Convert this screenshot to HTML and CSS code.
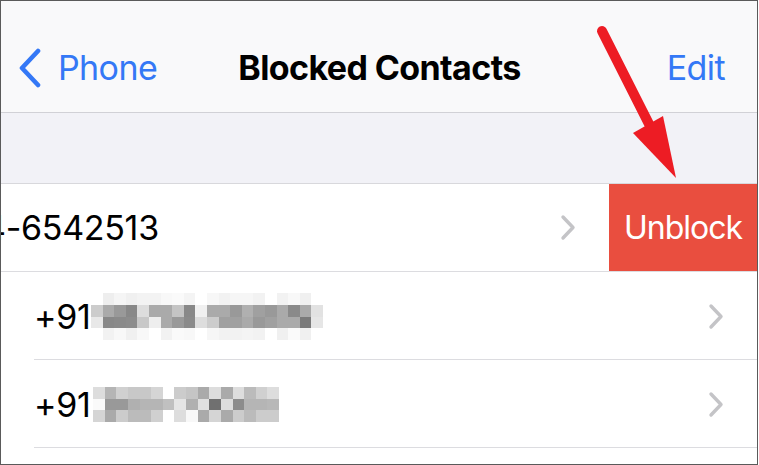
FILE: index.html
```html
<!DOCTYPE html>
<html lang="en">
  <head>
    <link rel="stylesheet" href="styles.css">
    <title>Blocked Contacts</title>
  </head>
  <body>
    <div class="frame">
      <div class="nav">
        <div class="back">
          <svg class="back-icon" width="24" height="40" viewBox="0 0 24 40">
            <path d="M20 3 L4 20 L20 37" fill="none" stroke="#3478f6" stroke-width="4.6" stroke-linecap="round" stroke-linejoin="round"/>
          </svg>
          <span>Phone</span>
        </div>
        <div class="title">Blocked Contacts</div>
        <div class="edit">Edit</div>
      </div>

      <div class="section-gap"></div>

      <div class="list">
        <div class="row row-swiped">
          <span class="number number-cut">4-6542513</span>
          <svg class="chevron" width="16" height="27" viewBox="0 0 16 27">
            <path d="M3 3 L13 13.5 L3 24" fill="none" stroke="#c4c4c7" stroke-width="3.4" stroke-linecap="round" stroke-linejoin="round"/>
          </svg>
          <div class="unblock">Unblock</div>
        </div>

        <div class="row row-inset">
          <span class="number">+91</span>
          <svg class="blur" width="232" height="47" viewBox="0 0 20 4" preserveAspectRatio="none" shape-rendering="crispEdges">
            <rect x="1" y="0" width="1" height="1" fill="#eeeeee"/>
            <rect x="2" y="0" width="1" height="1" fill="#f5f5f5"/>
            <rect x="3" y="0" width="1" height="1" fill="#f0f0f0"/>
            <rect x="4" y="0" width="1" height="1" fill="#f3f3f3"/>
            <rect x="5" y="0" width="1" height="1" fill="#f3f3f3"/>
            <rect x="6" y="0" width="1" height="1" fill="#f8f8f8"/>
            <rect x="7" y="0" width="1" height="1" fill="#fafafa"/>
            <rect x="8" y="0" width="1" height="1" fill="#f4f4f4"/>
            <rect x="10" y="0" width="1" height="1" fill="#f7f7f7"/>
            <rect x="11" y="0" width="1" height="1" fill="#f2f2f2"/>
            <rect x="12" y="0" width="1" height="1" fill="#f6f6f6"/>
            <rect x="13" y="0" width="1" height="1" fill="#f6f6f6"/>
            <rect x="14" y="0" width="1" height="1" fill="#f2f2f2"/>
            <rect x="16" y="0" width="1" height="1" fill="#f2f2f2"/>
            <rect x="17" y="0" width="1" height="1" fill="#f8f8f8"/>
            <rect x="18" y="0" width="1" height="1" fill="#f0f0f0"/>

            <rect x="0" y="1" width="1" height="1" fill="#cccccc"/>
            <rect x="1" y="1" width="1" height="1" fill="#aaaaaa"/>
            <rect x="2" y="1" width="1" height="1" fill="#999999"/>
            <rect x="3" y="1" width="1" height="1" fill="#888888"/>
            <rect x="4" y="1" width="1" height="1" fill="#dddddd"/>
            <rect x="5" y="1" width="1" height="1" fill="#aaaaaa"/>
            <rect x="6" y="1" width="1" height="1" fill="#aaaaaa"/>
            <rect x="7" y="1" width="1" height="1" fill="#c4c4c4"/>
            <rect x="8" y="1" width="1" height="1" fill="#888888"/>
            <rect x="9" y="1" width="1" height="1" fill="#f0f0f0"/>
            <rect x="10" y="1" width="1" height="1" fill="#aaaaaa"/>
            <rect x="11" y="1" width="1" height="1" fill="#aaaaaa"/>
            <rect x="12" y="1" width="1" height="1" fill="#999999"/>
            <rect x="13" y="1" width="1" height="1" fill="#b0b0b0"/>
            <rect x="14" y="1" width="1" height="1" fill="#a0a0a0"/>
            <rect x="15" y="1" width="1" height="1" fill="#999999"/>
            <rect x="16" y="1" width="1" height="1" fill="#aaaaaa"/>
            <rect x="17" y="1" width="1" height="1" fill="#8a8a8a"/>
            <rect x="18" y="1" width="1" height="1" fill="#aaaaaa"/>
            <rect x="19" y="1" width="1" height="1" fill="#e2e2e2"/>

            <rect x="0" y="2" width="1" height="1" fill="#e8e8e8"/>
            <rect x="1" y="2" width="1" height="1" fill="#888888"/>
            <rect x="2" y="2" width="1" height="1" fill="#8a8a8a"/>
            <rect x="3" y="2" width="1" height="1" fill="#8c8c8c"/>
            <rect x="4" y="2" width="1" height="1" fill="#c8c8c8"/>
            <rect x="5" y="2" width="1" height="1" fill="#eeeeee"/>
            <rect x="6" y="2" width="1" height="1" fill="#aaaaaa"/>
            <rect x="7" y="2" width="1" height="1" fill="#999999"/>
            <rect x="8" y="2" width="1" height="1" fill="#8a8a8a"/>
            <rect x="9" y="2" width="1" height="1" fill="#dddddd"/>
            <rect x="10" y="2" width="1" height="1" fill="#cccccc"/>
            <rect x="11" y="2" width="1" height="1" fill="#a0a0a0"/>
            <rect x="12" y="2" width="1" height="1" fill="#a0a0a0"/>
            <rect x="13" y="2" width="1" height="1" fill="#aaaaaa"/>
            <rect x="14" y="2" width="1" height="1" fill="#999999"/>
            <rect x="15" y="2" width="1" height="1" fill="#a0a0a0"/>
            <rect x="16" y="2" width="1" height="1" fill="#aaaaaa"/>
            <rect x="17" y="2" width="1" height="1" fill="#aaaaaa"/>
            <rect x="18" y="2" width="1" height="1" fill="#7a7a7a"/>
            <rect x="19" y="2" width="1" height="1" fill="#e6e6e6"/>

            <rect x="1" y="3" width="1" height="1" fill="#f2f2f2"/>
            <rect x="2" y="3" width="1" height="1" fill="#f8f8f8"/>
            <rect x="3" y="3" width="1" height="1" fill="#f0f0f0"/>
            <rect x="4" y="3" width="1" height="1" fill="#f8f8f8"/>
            <rect x="6" y="3" width="1" height="1" fill="#f2f2f2"/>
            <rect x="7" y="3" width="1" height="1" fill="#fafafa"/>
            <rect x="8" y="3" width="1" height="1" fill="#f8f8f8"/>
            <rect x="10" y="3" width="1" height="1" fill="#f6f6f6"/>
            <rect x="11" y="3" width="1" height="1" fill="#f2f2f2"/>
            <rect x="12" y="3" width="1" height="1" fill="#f2f2f2"/>
            <rect x="13" y="3" width="1" height="1" fill="#f4f4f4"/>
            <rect x="14" y="3" width="1" height="1" fill="#f2f2f2"/>
            <rect x="16" y="3" width="1" height="1" fill="#f0f0f0"/>
            <rect x="17" y="3" width="1" height="1" fill="#fafafa"/>
            <rect x="18" y="3" width="1" height="1" fill="#f0f0f0"/>
          </svg>
          <svg class="chevron" width="16" height="27" viewBox="0 0 16 27">
            <path d="M3 3 L13 13.5 L3 24" fill="none" stroke="#c4c4c7" stroke-width="3.4" stroke-linecap="round" stroke-linejoin="round"/>
          </svg>
        </div>

        <div class="row row-inset">
          <span class="number">+91</span>
          <svg class="blur blur-short" width="186" height="35" viewBox="0 0 16 3" preserveAspectRatio="none" shape-rendering="crispEdges">
            <rect x="0" y="0" width="1" height="1" fill="#dddddd"/>
            <rect x="1" y="0" width="1" height="1" fill="#b5b5b5"/>
            <rect x="2" y="0" width="1" height="1" fill="#d0d0d0"/>
            <rect x="3" y="0" width="1" height="1" fill="#c8c8c8"/>
            <rect x="4" y="0" width="1" height="1" fill="#c8c8c8"/>
            <rect x="5" y="0" width="1" height="1" fill="#d5d5d5"/>
            <rect x="7" y="0" width="1" height="1" fill="#cccccc"/>
            <rect x="8" y="0" width="1" height="1" fill="#c5c5c5"/>
            <rect x="9" y="0" width="1" height="1" fill="#aaaaaa"/>
            <rect x="10" y="0" width="1" height="1" fill="#dddddd"/>
            <rect x="11" y="0" width="1" height="1" fill="#aaaaaa"/>
            <rect x="12" y="0" width="1" height="1" fill="#dddddd"/>
            <rect x="13" y="0" width="1" height="1" fill="#bbbbbb"/>
            <rect x="14" y="0" width="1" height="1" fill="#d0d0d0"/>
            <rect x="15" y="0" width="1" height="1" fill="#dddddd"/>

            <rect x="0" y="1" width="1" height="1" fill="#fafafa"/>
            <rect x="1" y="1" width="1" height="1" fill="#999999"/>
            <rect x="2" y="1" width="1" height="1" fill="#999999"/>
            <rect x="3" y="1" width="1" height="1" fill="#b0b0b0"/>
            <rect x="4" y="1" width="1" height="1" fill="#b5b5b5"/>
            <rect x="5" y="1" width="1" height="1" fill="#b5b5b5"/>
            <rect x="6" y="1" width="1" height="1" fill="#c0c0c0"/>
            <rect x="7" y="1" width="1" height="1" fill="#e5e5e5"/>
            <rect x="8" y="1" width="1" height="1" fill="#b0b0b0"/>
            <rect x="9" y="1" width="1" height="1" fill="#e0e0e0"/>
            <rect x="10" y="1" width="1" height="1" fill="#707070"/>
            <rect x="11" y="1" width="1" height="1" fill="#dddddd"/>
            <rect x="12" y="1" width="1" height="1" fill="#8c8c8c"/>
            <rect x="13" y="1" width="1" height="1" fill="#b5b5b5"/>
            <rect x="14" y="1" width="1" height="1" fill="#b5b5b5"/>
            <rect x="15" y="1" width="1" height="1" fill="#b8b8b8"/>

            <rect x="0" y="2" width="1" height="1" fill="#d5d5d5"/>
            <rect x="1" y="2" width="1" height="1" fill="#aaaaaa"/>
            <rect x="2" y="2" width="1" height="1" fill="#cccccc"/>
            <rect x="3" y="2" width="1" height="1" fill="#bbbbbb"/>
            <rect x="4" y="2" width="1" height="1" fill="#bbbbbb"/>
            <rect x="5" y="2" width="1" height="1" fill="#d0d0d0"/>
            <rect x="7" y="2" width="1" height="1" fill="#dddddd"/>
            <rect x="8" y="2" width="1" height="1" fill="#f8f8f8"/>
            <rect x="9" y="2" width="1" height="1" fill="#aaaaaa"/>
            <rect x="10" y="2" width="1" height="1" fill="#d5d5d5"/>
            <rect x="11" y="2" width="1" height="1" fill="#aaaaaa"/>
            <rect x="12" y="2" width="1" height="1" fill="#cccccc"/>
            <rect x="13" y="2" width="1" height="1" fill="#bbbbbb"/>
            <rect x="14" y="2" width="1" height="1" fill="#cccccc"/>
            <rect x="15" y="2" width="1" height="1" fill="#cccccc"/>
          </svg>
          <svg class="chevron" width="16" height="27" viewBox="0 0 16 27">
            <path d="M3 3 L13 13.5 L3 24" fill="none" stroke="#c4c4c7" stroke-width="3.4" stroke-linecap="round" stroke-linejoin="round"/>
          </svg>
        </div>
      </div>

      <!-- annotation arrow drawn over the screenshot -->
      <svg class="arrow" width="758" height="465" viewBox="0 0 758 465">
        <line x1="602" y1="31" x2="651" y2="128" stroke="#ed1c24" stroke-width="10" stroke-linecap="round"/>
        <polygon points="633,133 663,116 676,178" fill="#ed1c24"/>
      </svg>
    </div>
  </body>
</html>
```

FILE: styles.css
```css
* {
  box-sizing: border-box;
}
body {
  margin: 0;
  background: #fff;
  font-family: Inter, "Noto Sans", sans-serif;
}
.frame {
  position: relative;
  width: 758px;
  height: 465px;
  border: 1px solid #5a5a5a;
  background: #fff;
  overflow: hidden;
}

.nav {
  display: grid;
  grid-template-columns: 1fr auto 1fr;
  align-items: center;
  height: 112px;
  padding: 22px 32px 0 17px;
  background: #f9f9fa;
  border-bottom: 1px solid #d1d1d6;
  font-size: 34px;
  letter-spacing: -0.6px;
}
.back {
  display: flex;
  align-items: center;
  color: #3478f6;
}
.back-icon {
  margin-right: 16px;
}
.title {
  font-weight: 700;
  color: #000;
  margin-left: 16px;
}
.edit {
  justify-self: end;
  color: #3478f6;
}

.section-gap {
  height: 71px;
  background: #f2f2f7;
  border-bottom: 1px solid #d8d8dc;
}

.row {
  display: flex;
  align-items: center;
  height: 88px;
  padding-left: 33px;
  padding-right: 33px;
  position: relative;
  font-size: 34px;
  letter-spacing: -0.3px;
  color: #000;
  overflow: hidden;
}
.row-swiped {
  padding-left: 0;
  padding-right: 0;
  border-bottom: 1px solid #dcdce0;
}
.row-inset::after {
  content: "";
  position: absolute;
  left: 33px;
  right: 0;
  bottom: 0;
  border-bottom: 1px solid #dcdce0;
}
.number-cut {
  margin-left: -17px;
}
.blur-short {
  margin-left: 2px;
}
.chevron {
  margin-left: auto;
}
.row-swiped .chevron {
  margin-right: 33px;
}
.unblock {
  display: flex;
  align-items: center;
  justify-content: center;
  width: 148px;
  height: 100%;
  background: #e94e3f;
  color: #fff;
  font-size: 32px;
  letter-spacing: -1px;
}

.arrow {
  position: absolute;
  left: -1px;
  top: -1px;
}
```
